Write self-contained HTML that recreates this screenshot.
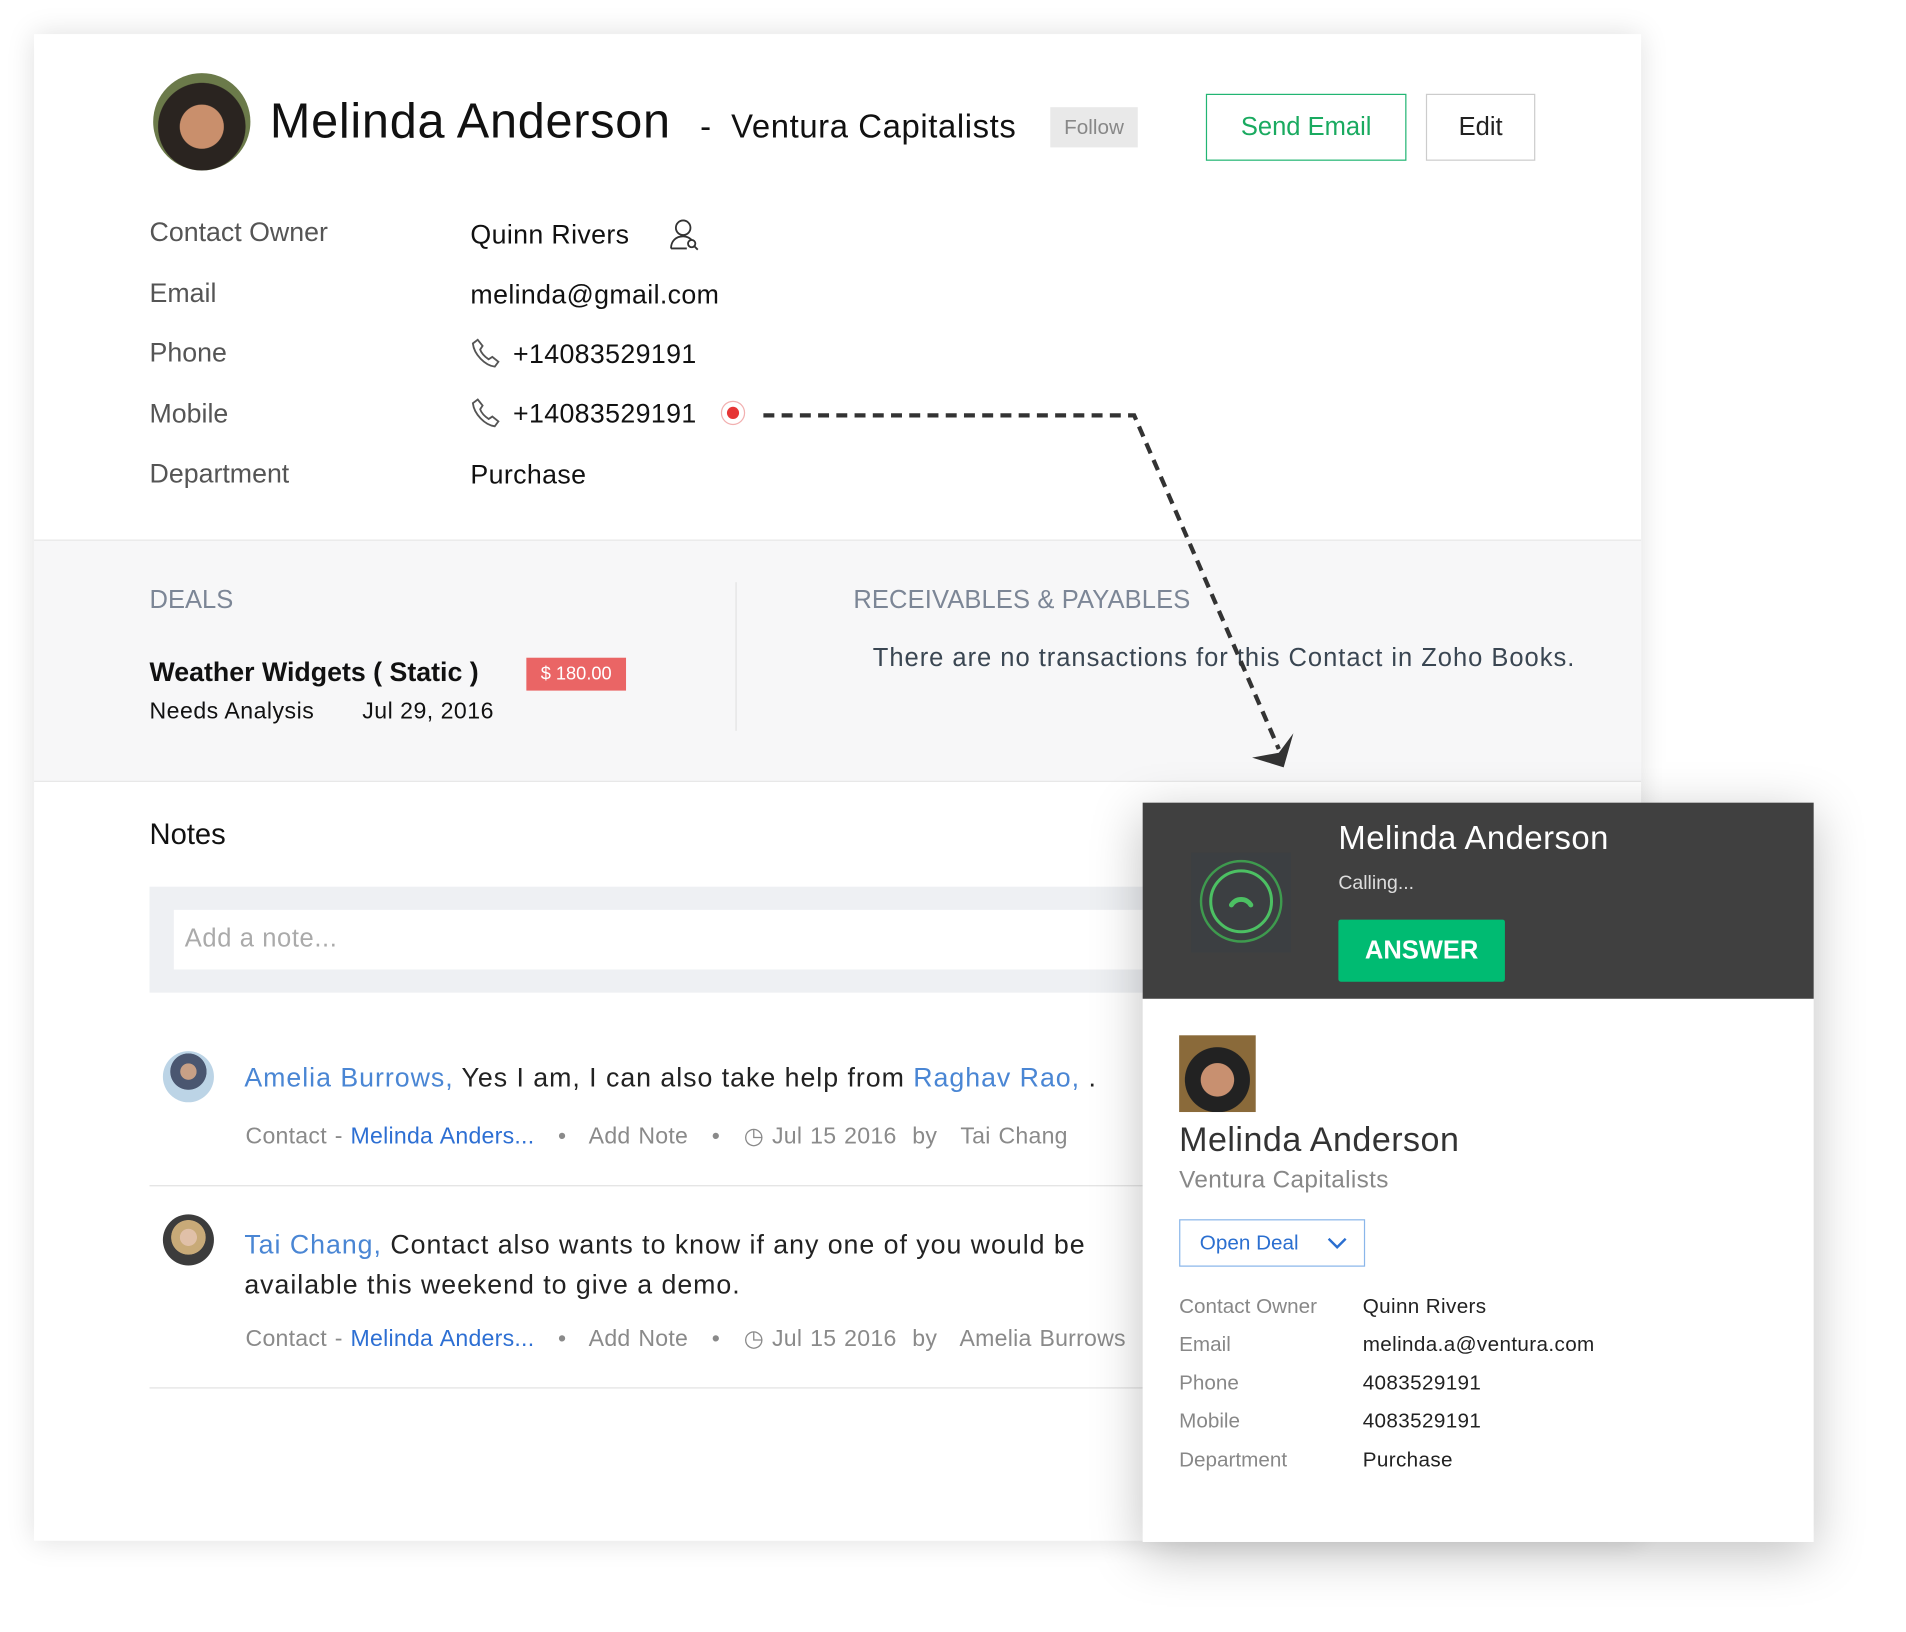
<!DOCTYPE html>
<html><head><meta charset="utf-8"><style>
html,body{margin:0;padding:0;background:#fff;overflow:hidden}
body{width:1906px;height:1632px;position:relative;font-family:"Liberation Sans",sans-serif}
#w{position:absolute;left:0;top:0;width:1568px;height:1340px;transform:scale(1.2156,1.218);transform-origin:0 0}
.a{position:absolute;white-space:nowrap}
.card{position:absolute;left:28px;top:28px;width:1322px;height:1237px;background:#fff;box-shadow:0 0 22px rgba(0,0,0,.13)}
.lbl{position:absolute;left:123px;font-size:22px;color:#555;line-height:26px}
.val{position:absolute;left:387px;font-size:22px;color:#111;line-height:26px;letter-spacing:.3px}
.meta{font-size:19px;color:#8a8a8a;letter-spacing:.2px;word-spacing:1px}
.blue{color:#2d6fd3}
.lb{color:#4a86d4}
.pl{position:absolute;left:970px;font-size:17px;color:#888}
.pv{position:absolute;left:1121px;font-size:17px;color:#222;letter-spacing:.3px}
</style></head><body><div id="w">
<div class="card"></div>
<div class="a" style="left:126px;top:60px;width:80px;height:80px;border-radius:50%;background:radial-gradient(circle at 50% 55%,#c98f6c 0 30%,#2a2420 31% 60%,#6b7a4a 61%)"></div>
<div class="a" style="left:222px;top:78px;font-size:40px;color:#111;letter-spacing:.6px">Melinda Anderson</div>
<div class="a" style="left:576px;top:89px;font-size:27px;color:#111;letter-spacing:.5px">-&nbsp; Ventura Capitalists</div>
<div class="a" style="left:864px;top:88px;width:72px;height:33px;background:#e9e9e9;color:#888;font-size:17px;line-height:33px;text-align:center">Follow</div>
<div class="a" style="left:992px;top:77px;width:163px;height:53px;border:1.5px solid #22b573;color:#1aaa60;font-size:21px;line-height:53px;text-align:center">Send Email</div>
<div class="a" style="left:1173px;top:77px;width:88px;height:53px;border:1.5px solid #ccc;color:#222;font-size:21px;line-height:53px;text-align:center">Edit</div>
<div class="lbl" style="top:178px">Contact Owner</div>
<div class="lbl" style="top:228px">Email</div>
<div class="lbl" style="top:277px">Phone</div>
<div class="lbl" style="top:327px">Mobile</div>
<div class="lbl" style="top:376px">Department</div>
<div class="val" style="top:180px">Quinn Rivers</div>
<svg class="a" style="left:548px;top:178px" width="30" height="30" viewBox="0 0 30 30" fill="none" stroke="#333" stroke-width="1.5"><circle cx="14" cy="9" r="6"/><path d="M4 26c0-6 4-10 10-10 3 0 5 1 7 3M4 26h13"/><circle cx="21" cy="22" r="3"/><path d="M23 24l3 3"/></svg>
<div class="val" style="top:229px">melinda@gmail.com</div>
<svg class="a" style="left:387px;top:277px" width="26" height="26" viewBox="0 0 26 26" fill="none" stroke="#555" stroke-width="1.5"><path d="M6 2l4 5-2 3c1 3 4 6 7 8l3-2 5 4-3 4C12 23 3 14 2 5z"/></svg>
<div class="val" style="left:422px;top:278px">+14083529191</div>
<svg class="a" style="left:387px;top:326px" width="26" height="26" viewBox="0 0 26 26" fill="none" stroke="#555" stroke-width="1.5"><path d="M6 2l4 5-2 3c1 3 4 6 7 8l3-2 5 4-3 4C12 23 3 14 2 5z"/></svg>
<div class="val" style="left:422px;top:327px">+14083529191</div>
<div class="a" style="left:593px;top:329px;width:20px;height:20px;border-radius:50%;border:1px solid #f2b0b0;box-sizing:border-box"><div style="margin:4px;width:10px;height:10px;border-radius:50%;background:#e63535"></div></div>
<div class="val" style="top:377px">Purchase</div>
<div class="a" style="left:28px;top:443px;width:1322px;height:197px;background:#f7f7f8;border-top:1px solid #e8e8e8;border-bottom:1px solid #e8e8e8"></div>
<div class="a" style="left:605px;top:478px;width:1px;height:122px;background:#e2e2e2"></div>
<div class="a" style="left:123px;top:481px;font-size:21px;color:#7c8696">DEALS</div>
<div class="a" style="left:702px;top:481px;font-size:21px;color:#7c8696;letter-spacing:.1px">RECEIVABLES &amp; PAYABLES</div>
<div class="a" style="left:718px;top:529px;font-size:21px;color:#3a4652;letter-spacing:.8px">There are no transactions for this Contact in Zoho Books.</div>
<div class="a" style="left:123px;top:539px;font-size:22px;color:#111;font-weight:bold">Weather Widgets ( Static )</div>
<div class="a" style="left:433px;top:540px;width:82px;height:27px;background:#ea6565;color:#fff;font-size:15px;line-height:27px;text-align:center">$ 180.00</div>
<div class="a" style="left:123px;top:574px;font-size:19px;color:#111;letter-spacing:.4px">Needs Analysis</div>
<div class="a" style="left:298px;top:574px;font-size:19px;color:#111;letter-spacing:.4px">Jul 29, 2016</div>
<div class="a" style="left:123px;top:672px;font-size:24px;color:#111">Notes</div>
<div class="a" style="left:123px;top:728px;width:830px;height:87px;background:#eef0f3"></div>
<div class="a" style="left:143px;top:747px;width:810px;height:49px;background:#fff"></div>
<div class="a" style="left:152px;top:759px;font-size:21px;color:#aaa;letter-spacing:.5px">Add a note...</div>
<div class="a" style="left:134px;top:863px;width:42px;height:42px;border-radius:50%;background:radial-gradient(circle at 50% 40%,#c8a086 0 20%,#4a5670 21% 45%,#bcd4e6 46%)"></div>
<div class="a" style="left:201px;top:872px;font-size:22px;color:#222;letter-spacing:.8px"><span class="lb">Amelia Burrows,</span> Yes I am, I can also take help from <span class="lb">Raghav Rao,</span> .</div>
<div class="a meta" style="left:202px;top:922px">Contact - <span class="blue">Melinda Anders...</span> &nbsp;&nbsp;•&nbsp;&nbsp; Add Note &nbsp;&nbsp;•&nbsp;&nbsp; ◷ Jul 15 2016 &nbsp;by&nbsp;&nbsp; Tai Chang</div>
<div class="a" style="left:123px;top:973px;width:817px;height:1px;background:#e2e2e2"></div>
<div class="a" style="left:134px;top:997px;width:42px;height:42px;border-radius:50%;background:radial-gradient(circle at 50% 45%,#e0c0a8 0 22%,#c8aa78 23% 45%,#3c3c3c 46%)"></div>
<div class="a" style="left:201px;top:1005px;font-size:22px;color:#222;line-height:33px;letter-spacing:.8px"><span class="lb">Tai Chang,</span> Contact also wants to know if any one of you would be<br>available this weekend to give a demo.</div>
<div class="a meta" style="left:202px;top:1088px">Contact - <span class="blue">Melinda Anders...</span> &nbsp;&nbsp;•&nbsp;&nbsp; Add Note &nbsp;&nbsp;•&nbsp;&nbsp; ◷ Jul 15 2016 &nbsp;by&nbsp;&nbsp; Amelia Burrows</div>
<div class="a" style="left:123px;top:1139px;width:817px;height:1px;background:#e2e2e2"></div>
<svg class="a" style="left:0;top:0" width="1568" height="1340"><path d="M628 341H933L1052 615" fill="none" stroke="#333" stroke-width="3.5" stroke-dasharray="9 6"/><path d="M1030 622L1056 630L1064 602L1052 618Z" fill="#333"/></svg>
<div class="a" style="left:940px;top:659px;width:552px;height:607px;background:#fff;box-shadow:0 10px 40px rgba(0,0,0,.25)"></div>
<div class="a" style="left:940px;top:659px;width:552px;height:161px;background:#404040"></div>
<div class="a" style="left:980px;top:700px;width:82px;height:82px;background:#3c3f42"></div>
<svg class="a" style="left:980px;top:700px" width="82" height="82"><circle cx="41" cy="40" r="33" fill="none" stroke="#3e9a4e" stroke-width="2"/><circle cx="41" cy="40" r="25" fill="none" stroke="#4cc063" stroke-width="2.5"/><path d="M33 43c4-6 12-6 16 0" fill="none" stroke="#4cc063" stroke-width="4" stroke-linecap="round"/></svg>
<div class="a" style="left:1101px;top:673px;font-size:27px;color:#fff;letter-spacing:.4px">Melinda Anderson</div>
<div class="a" style="left:1101px;top:717px;font-size:16px;color:#ddd">Calling...</div>
<div class="a" style="left:1101px;top:755px;width:137px;height:51px;background:#00bb72;border-radius:2px;color:#fff;font-size:21px;font-weight:bold;line-height:51px;text-align:center">ANSWER</div>
<div class="a" style="left:970px;top:850px;width:63px;height:63px;background:radial-gradient(circle at 50% 58%,#c89070 0 28%,#222 29% 55%,#8a6a3a 56%)"></div>
<div class="a" style="left:970px;top:920px;font-size:28px;color:#333;letter-spacing:.4px">Melinda Anderson</div>
<div class="a" style="left:970px;top:958px;font-size:20px;color:#888;letter-spacing:.3px">Ventura Capitalists</div>
<div class="a" style="left:970px;top:1001px;width:151px;height:37px;border:1.5px solid #8ab6ea;color:#2b6fd0;font-size:17px;line-height:37px;box-sizing:content-box"><span style="margin-left:16px">Open Deal</span><svg style="position:absolute;left:120px;top:13px" width="18" height="12"><path d="M2 2l7 7 7-7" fill="none" stroke="#2b6fd0" stroke-width="2"/></svg></div>
<div class="pl" style="top:1063px">Contact Owner</div><div class="pv" style="top:1063px">Quinn Rivers</div>
<div class="pl" style="top:1094px">Email</div><div class="pv" style="top:1094px">melinda.a@ventura.com</div>
<div class="pl" style="top:1126px">Phone</div><div class="pv" style="top:1126px">4083529191</div>
<div class="pl" style="top:1157px">Mobile</div><div class="pv" style="top:1157px">4083529191</div>
<div class="pl" style="top:1189px">Department</div><div class="pv" style="top:1189px">Purchase</div>
</div></body></html>
